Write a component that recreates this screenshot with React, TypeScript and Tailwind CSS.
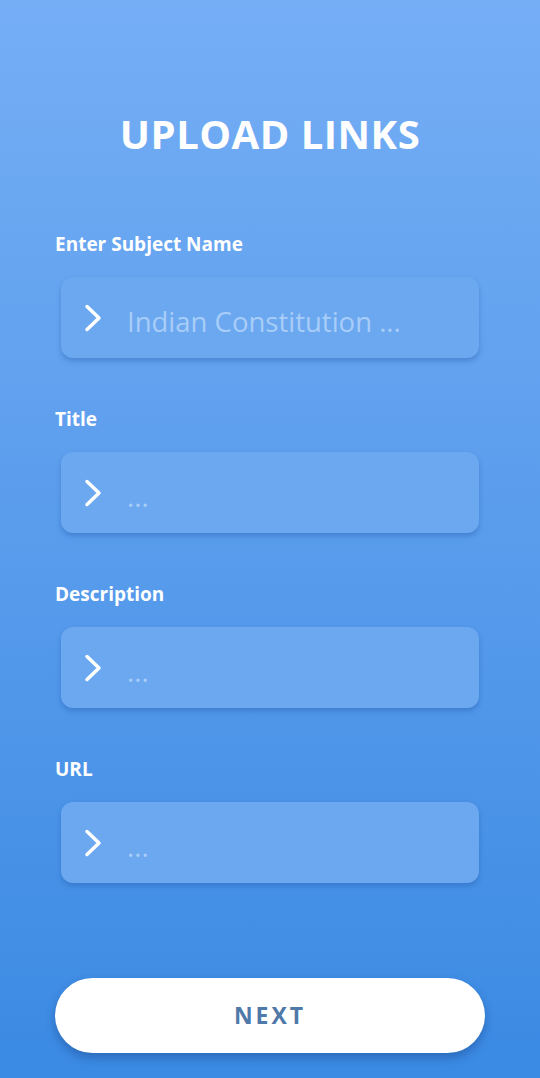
import React from 'react';

function Chevron() {
  return (
    <svg width="18" height="28" viewBox="0 0 18 28" fill="none" className="shrink-0">
      <path d="M3 2.5l12 11.5L3 25.5" stroke="white" strokeWidth="3.5" strokeLinecap="round" strokeLinejoin="round" />
    </svg>
  );
}

function Field({ label, placeholder }: { label: string; placeholder: string }) {
  return (
    <div className="flex flex-col">
      <label className="text-[19px] font-bold text-white leading-none">{label}</label>
      <div className="mx-[6px] mt-[23px] h-[81px] rounded-[12px] bg-[#6ba8f0] shadow-[0_3px_5px_rgba(30,80,160,0.35)] flex items-center pl-[23px] pr-4">
        <Chevron />
        <input
          placeholder={placeholder}
          className="ml-[25px] mt-[8px] flex-1 bg-transparent outline-none text-[27.5px] text-white placeholder:text-[#a8cdf8] leading-none"
        />
      </div>
    </div>
  );
}

export default function App() {
  return (
    <div
      className="w-[540px] h-[1078px] bg-gradient-to-b from-[#75aef5] to-[#3a8ae3] px-[55px] flex flex-col"
      style={{ fontFamily: '"Open Sans", sans-serif' }}
    >
      <h1 className="mt-[114px] text-center text-[40px] font-bold text-white leading-none tracking-[0.5px]">
        UPLOAD LINKS
      </h1>
      <div className="mt-[81px] flex flex-col gap-[52px]">
        <Field label="Enter Subject Name" placeholder="Indian Constitution ..." />
        <Field label="Title" placeholder="..." />
        <Field label="Description" placeholder="..." />
        <Field label="URL" placeholder="..." />
      </div>
      <button className="mt-[95px] h-[75px] w-full rounded-full bg-white shadow-[0_5px_10px_rgba(20,60,130,0.4)] text-[23px] font-bold tracking-[3px] text-[#4f79a8]">
        NEXT
      </button>
    </div>
  );
}
